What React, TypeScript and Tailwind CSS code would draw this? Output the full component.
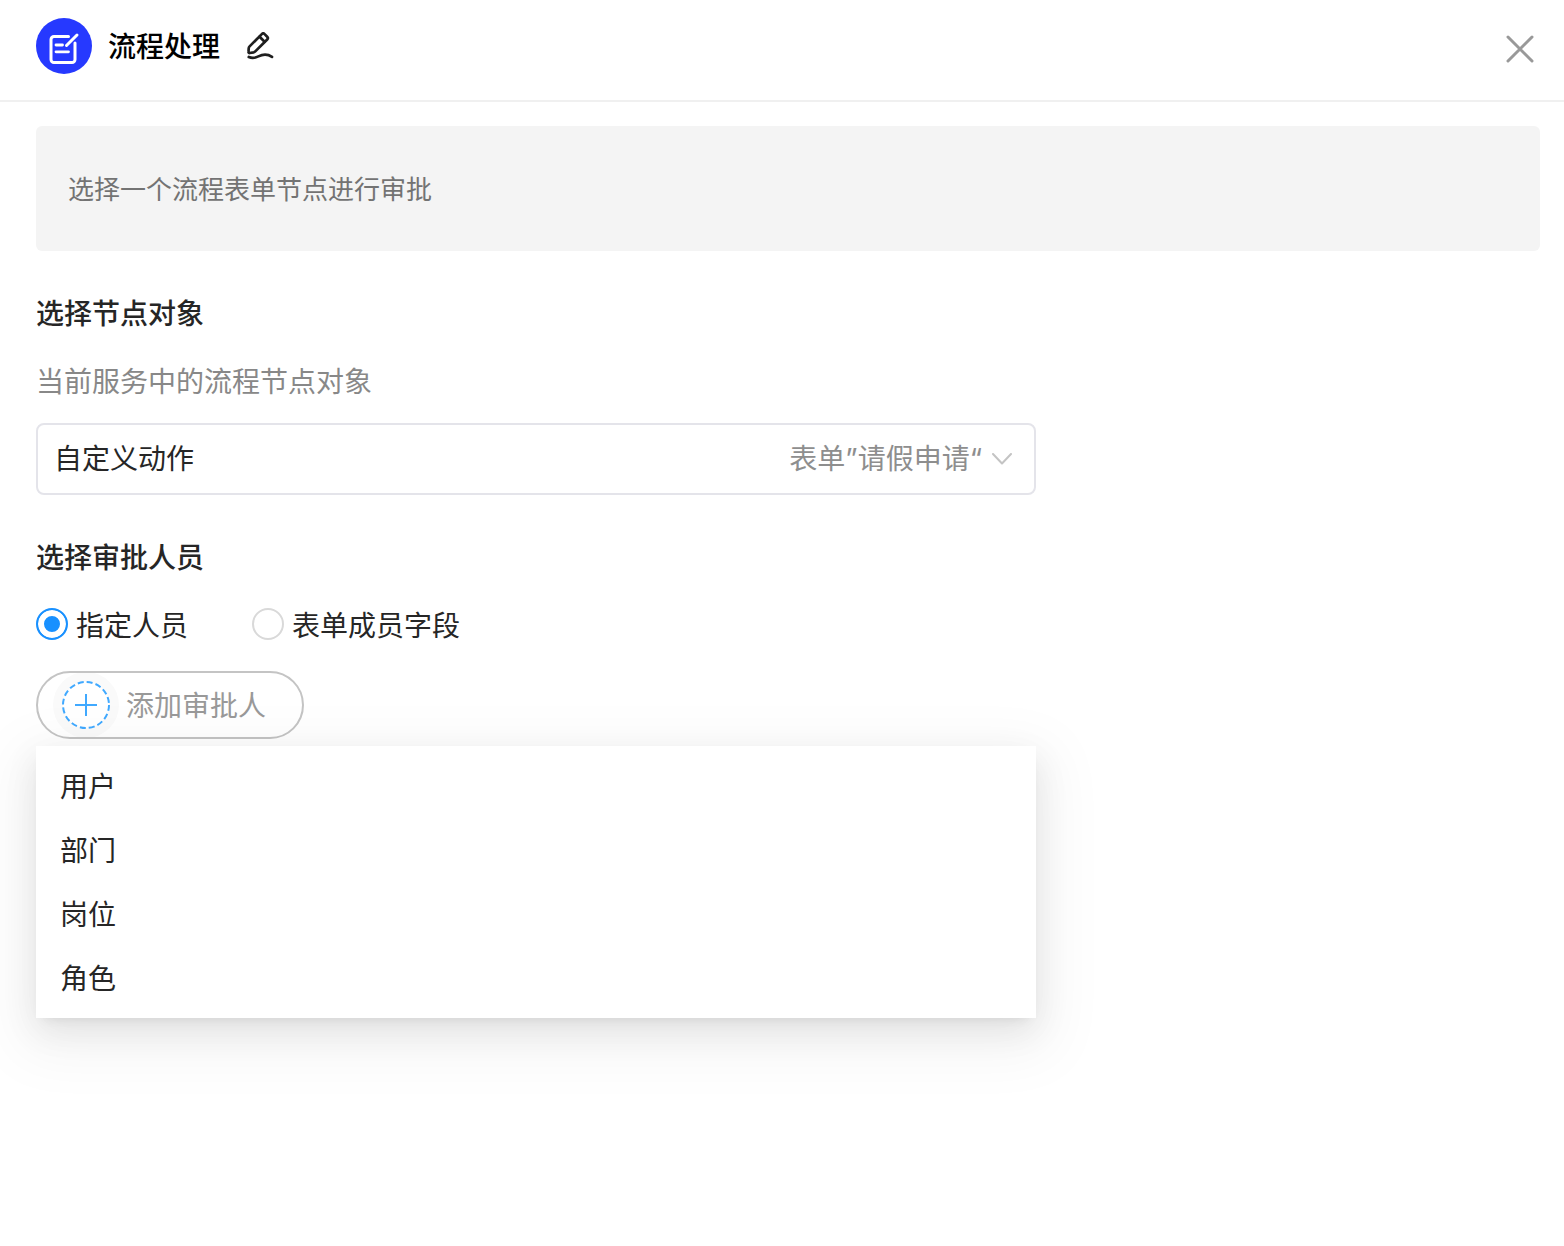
import { useState } from "react";
import clsx from "clsx";

const APPROVER_TYPES = ["用户", "部门", "岗位", "角色"];

const SOURCES = [
  { value: "assigned", label: "指定人员" },
  { value: "field", label: "表单成员字段" },
];

function FormIcon() {
  return (
    <svg
      viewBox="0 0 56 56"
      className="size-14 shrink-0"
      fill="none"
      stroke="#fff"
      strokeWidth="3"
      strokeLinecap="round"
      strokeLinejoin="round"
    >
      <circle cx="28" cy="28" r="28" fill="#2639ff" stroke="none" />
      <path d="M32.500 18.500H18a3 3 0 0 0-3 3V41.500a3 3 0 0 0 3 3H36a3 3 0 0 0 3-3V25" />
      <path d="M41 17L30.500 27.500" />
      <path d="M20 27h6.500M20 33.800h12.500" strokeWidth="2.800" />
    </svg>
  );
}

function RenameIcon() {
  return (
    <svg
      viewBox="0 0 28 28"
      className="size-7"
      fill="none"
      stroke="#1f1f1f"
      strokeWidth="2.700"
      strokeLinecap="round"
      strokeLinejoin="round"
    >
      <path d="M15.800 2.100a2 2 0 0 1 2.800 0l2.600 2.600a2 2 0 0 1 0 2.800L9.300 19.400a3 3 0 0 1-1.600.9l-4 .7a1 1 0 0 1-1.200-1.100l.2-3.600a3 3 0 0 1 .9-1.900z" />
      <path d="M13.600 4.800l5 5" />
      <path d="M2.800 25c3.600 1.600 6.600.9 9.600-.6 5-2.500 9.600-2.200 13.600.5" />
    </svg>
  );
}

function CloseIcon() {
  return (
    <svg viewBox="0 0 28 28" className="size-7" fill="none" stroke="#999" strokeWidth="3" strokeLinecap="round">
      <path d="M2 2l24 24M26 2L2 26" />
    </svg>
  );
}

function ChevronIcon() {
  return (
    <svg
      viewBox="0 0 20 12"
      className="h-3 w-5 shrink-0"
      fill="none"
      stroke="#c4c4c4"
      strokeWidth="2"
      strokeLinecap="round"
      strokeLinejoin="round"
    >
      <path d="M1 1l9 9.500L19 1" />
    </svg>
  );
}

function AddIcon() {
  return (
    <svg viewBox="0 0 66 66" className="size-[66px] shrink-0" fill="none" stroke="#40a9ff" strokeWidth="2">
      <circle cx="33" cy="33" r="33" fill="#fafafa" stroke="none" />
      <circle cx="33" cy="33" r="23" fill="#fff" strokeDasharray="6 3.030" />
      <path d="M33 22v22M22 33h22" />
    </svg>
  );
}

export default function App() {
  const [source, setSource] = useState("assigned");
  const [open, setOpen] = useState(true);

  return (
    <div className="min-h-screen bg-white font-['Noto_Sans_CJK_SC',sans-serif] text-[28px] leading-10 text-[#262626]">
      <header className="flex items-center border-b-2 border-[#f0f0f0] pt-[18px] pr-[30px] pb-[26px] pl-9">
        <FormIcon />
        <h1 className="ml-4 pb-0.5 font-medium text-black">流程处理</h1>
        <button className="ml-[26px]" aria-label="重命名">
          <RenameIcon />
        </button>
        <button className="mt-1.5 ml-auto" aria-label="关闭">
          <CloseIcon />
        </button>
      </header>

      <main className="pt-6 pr-6 pl-9">
        <p className="rounded-md bg-[#f4f4f4] px-8 pt-[42px] pb-[43px] text-[26px] text-[#737373]">
          选择一个流程表单节点进行审批
        </p>

        <h2 className="mt-[41px] font-medium">选择节点对象</h2>
        <p className="mt-7 text-[#888]">当前服务中的流程节点对象</p>
        <label className="mt-[23px] flex h-[72px] w-full max-w-[1000px] items-center rounded-lg border-2 border-[#e4e4ea] pr-[22px] pl-4">
          <span className="mr-2.5 flex grow items-baseline justify-between pb-0.5">
            <span>自定义动作</span>
            <select
              className="appearance-none bg-transparent text-right font-[Inter,'Noto_Sans_CJK_SC',sans-serif] text-[#8e8e8e] outline-none"
              defaultValue="leave"
            >
              <option value="leave">表单”请假申请“</option>
            </select>
          </span>
          <ChevronIcon />
        </label>

        <h2 className="mt-[41px] font-medium">选择审批人员</h2>
        <div className="mt-7 flex gap-16">
          {SOURCES.map((s) => (
            <label key={s.value} className="flex items-center gap-2">
              <input
                type="radio"
                name="source"
                value={s.value}
                checked={source === s.value}
                onChange={() => setSource(s.value)}
                className={clsx(
                  "size-8 appearance-none rounded-full border-2 border-[#d9d9d9] bg-white",
                  "checked:border-[#1890ff] checked:bg-[#1890ff] checked:shadow-[inset_0_0_0_6px_#fff]"
                )}
              />
              {s.label}
            </label>
          ))}
        </div>

        <div className="relative mt-[27px] max-w-[1000px]">
          <button
            className="flex h-[68px] items-center overflow-hidden rounded-full border-2 border-[#c4c4c4] pr-9 pl-[15px] text-[#999]"
            aria-expanded={open}
            onClick={() => setOpen(!open)}
          >
            <AddIcon />
            <span className="ml-[7px] pb-0.5">添加审批人</span>
          </button>

          {open && (
            <ul className="absolute top-full left-0 mt-[7px] w-full bg-white py-2 shadow-[0_6px_12px_-8px_rgba(0,0,0,0.12),0_12px_32px_0_rgba(0,0,0,0.08),0_18px_56px_16px_rgba(0,0,0,0.05)]">
              {APPROVER_TYPES.map((type) => (
                <li key={type}>
                  <button className="w-full px-6 pt-[11px] pb-[13px] text-left hover:bg-[#f5f5f5]" onClick={() => setOpen(false)}>
                    {type}
                  </button>
                </li>
              ))}
            </ul>
          )}
        </div>
      </main>
    </div>
  );
}
